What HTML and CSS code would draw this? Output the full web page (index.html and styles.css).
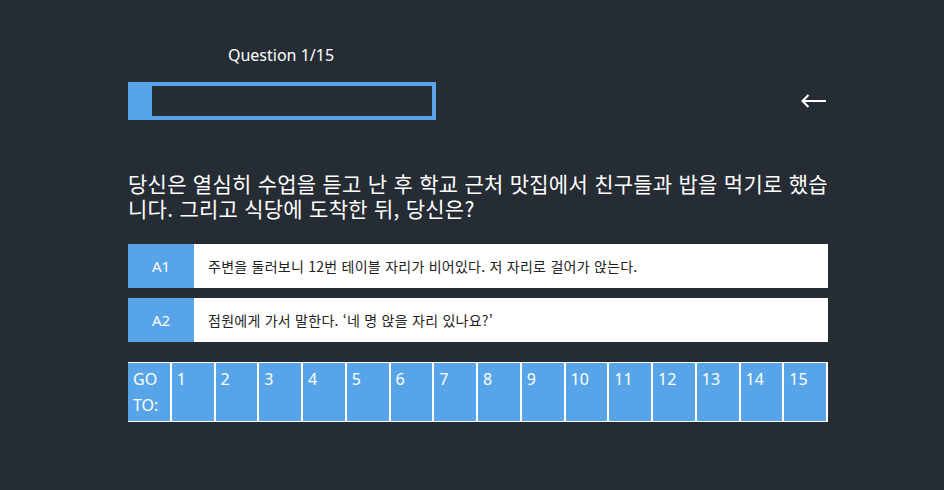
FILE: index.html
```html
<!DOCTYPE html>
<html lang="ko">
<head>
<meta charset="utf-8">
<title>Quiz</title>
<link rel="stylesheet" href="styles.css">
</head>
<body>
<main class="quiz">
  <header class="top">
    <div class="progress-col">
      <div class="count">Question 1/15</div>
      <div class="bar"><div class="fill" style="width: 6.667%"></div></div>
    </div>
    <button class="back" aria-label="back">
      <svg width="26" height="14" viewBox="0 0 26 14"><path d="M1 7H25M7.5 1L1.5 7L7.5 13" fill="none" stroke="#fff" stroke-width="2"/></svg>
    </button>
  </header>
  <p class="question">당신은 열심히 수업을 듣고 난 후 학교 근처 맛집에서 친구들과 밥을 먹기로 했습니다. 그리고 식당에 도착한 뒤, 당신은?</p>
  <ul class="answers">
    <li class="answer"><span class="tag">A1</span><span class="text">주변을 둘러보니 12번 테이블 자리가 비어있다. 저 자리로 걸어가 앉는다.</span></li>
    <li class="answer"><span class="tag">A2</span><span class="text">점원에게 가서 말한다. ‘네 명 앉을 자리 있나요?’</span></li>
  </ul>
  <nav class="goto">
    <div class="cell label">GO TO:</div>
    <div class="cell">1</div><div class="cell">2</div><div class="cell">3</div><div class="cell">4</div><div class="cell">5</div>
    <div class="cell">6</div><div class="cell">7</div><div class="cell">8</div><div class="cell">9</div><div class="cell">10</div>
    <div class="cell">11</div><div class="cell">12</div><div class="cell">13</div><div class="cell">14</div><div class="cell">15</div>
  </nav>
</main>
</body>
</html>
```
FILE: styles.css
```css
html, body {
  margin: 0;
  padding: 0;
  background: #262c34;
}
body {
  font-family: "Noto Sans", "Noto Sans CJK KR", sans-serif;
  color: #fff;
}
.quiz {
  width: 700px;
  margin-left: 128px;
  padding-top: 45px;
}
.top {
  display: flex;
  justify-content: space-between;
  align-items: flex-end;
}
.progress-col {
  width: 308px;
  display: flex;
  flex-direction: column;
}
.count {
  text-align: center;
  font-size: 16px;
  line-height: 20px;
  height: 20px;
  margin-bottom: 17px;
  padding-right: 2px;
}
.bar {
  box-sizing: border-box;
  height: 38px;
  border: 4px solid #57a5e8;
}
.fill {
  height: 100%;
  background: #57a5e8;
}
.back {
  background: none;
  border: 0;
  padding: 0;
  margin: 0 1px 12px 0;
  width: 26px;
  height: 14px;
  display: flex;
  cursor: pointer;
}
.question {
  margin: 51px 0 0;
  font-family: "Noto Sans CJK KR", sans-serif;
  font-size: 21px;
  letter-spacing: 0.25px;
  line-height: 25px;
  color: #fff;
}
.answers {
  list-style: none;
  margin: 23px 0 0;
  padding: 0;
  display: flex;
  flex-direction: column;
  gap: 10px;
}
.answer {
  display: flex;
  height: 44px;
  background: #fff;
}
.tag {
  width: 66px;
  flex: none;
  background: #57a5e8;
  color: #fff;
  display: flex;
  align-items: center;
  justify-content: center;
  font-size: 15px;
}
.text {
  display: flex;
  align-items: center;
  padding-left: 14px;
  font-family: "Noto Sans CJK KR", sans-serif;
  font-size: 14px;
  letter-spacing: 0.25px;
  color: #222;
}
.goto {
  margin-top: 20px;
  display: flex;
  gap: 2px;
  background: #fff;
  padding: 1px 2px 1px 0;
  height: 60px;
  box-sizing: border-box;
}
.cell {
  flex: 1;
  background: #57a5e8;
  color: #fff;
  font-size: 16px;
  line-height: 26px;
  padding: 3px 5px;
}
.cell.label {
  padding-left: 5px;
  word-spacing: 40px;
}
```
